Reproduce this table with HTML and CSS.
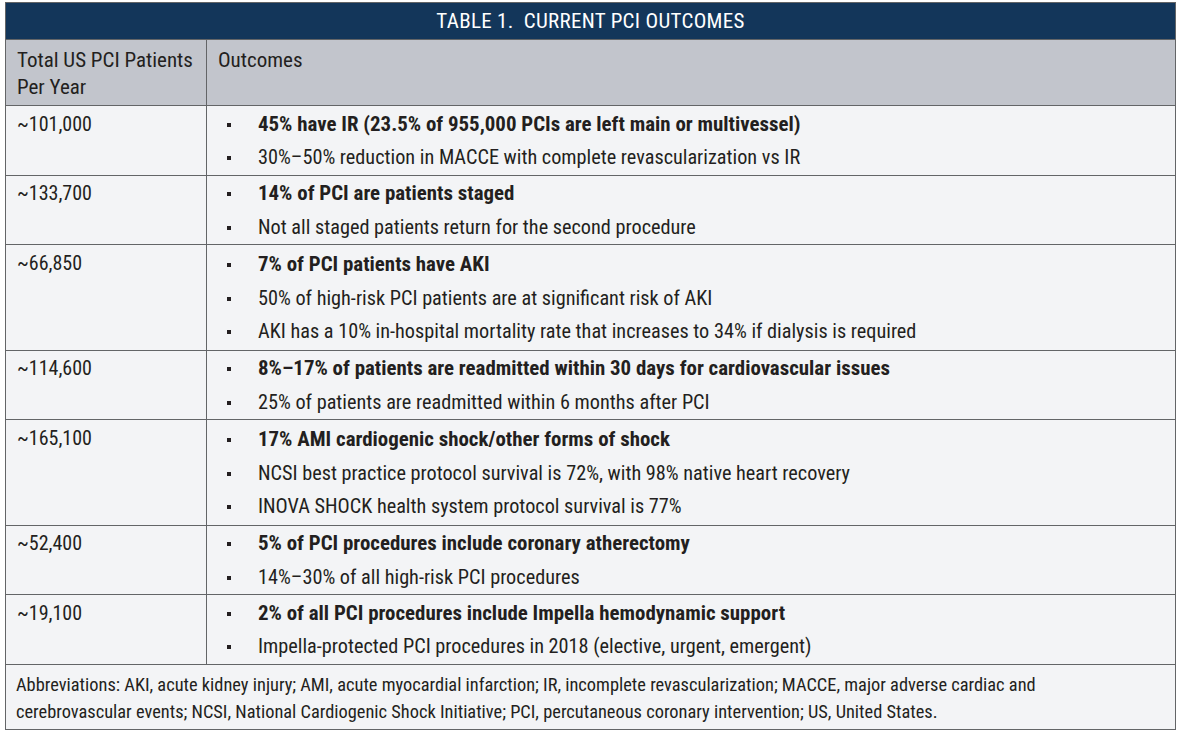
FILE: index.html
```html
<!DOCTYPE html>
<html>
<head>
<meta charset="utf-8">
<link rel="stylesheet" href="styles.css">
</head>
<body>
<table class="pci">
  <thead>
    <tr><th class="title" colspan="2">TABLE 1.&nbsp; CURRENT PCI OUTCOMES</th></tr>
    <tr class="head"><th class="c1">Total US PCI Patients<br>Per Year</th><th class="c2">Outcomes</th></tr>
  </thead>
  <tbody>
    <tr>
      <td class="num">~101,000</td>
      <td class="out"><ul>
        <li class="b">45% have IR (23.5% of 955,000 PCIs are left main or multivessel)</li>
        <li>30%–50% reduction in MACCE with complete revascularization vs IR</li>
      </ul></td>
    </tr>
    <tr>
      <td class="num">~133,700</td>
      <td class="out"><ul>
        <li class="b">14% of PCI are patients staged</li>
        <li>Not all staged patients return for the second procedure</li>
      </ul></td>
    </tr>
    <tr>
      <td class="num">~66,850</td>
      <td class="out"><ul class="three">
        <li class="b">7% of PCI patients have AKI</li>
        <li>50% of high-risk PCI patients are at significant risk of AKI</li>
        <li>AKI has a 10% in-hospital mortality rate that increases to 34% if dialysis is required</li>
      </ul></td>
    </tr>
    <tr>
      <td class="num">~114,600</td>
      <td class="out"><ul>
        <li class="b">8%–17% of patients are readmitted within 30 days for cardiovascular issues</li>
        <li>25% of patients are readmitted within 6 months after PCI</li>
      </ul></td>
    </tr>
    <tr>
      <td class="num">~165,100</td>
      <td class="out"><ul class="three">
        <li class="b">17% AMI cardiogenic shock/other forms of shock</li>
        <li>NCSI best practice protocol survival is 72%, with 98% native heart recovery</li>
        <li>INOVA SHOCK health system protocol survival is 77%</li>
      </ul></td>
    </tr>
    <tr>
      <td class="num">~52,400</td>
      <td class="out"><ul>
        <li class="b">5% of PCI procedures include coronary atherectomy</li>
        <li>14%–30% of all high-risk PCI procedures</li>
      </ul></td>
    </tr>
    <tr>
      <td class="num">~19,100</td>
      <td class="out"><ul>
        <li class="b">2% of all PCI procedures include Impella hemodynamic support</li>
        <li>Impella-protected PCI procedures in 2018 (elective, urgent, emergent)</li>
      </ul></td>
    </tr>
  </tbody>
  <tfoot>
    <tr><td class="foot" colspan="2">Abbreviations: AKI, acute kidney injury; AMI, acute myocardial infarction; IR, incomplete revascularization; MACCE, major adverse cardiac and<br>cerebrovascular events; NCSI, National Cardiogenic Shock Initiative; PCI, percutaneous coronary intervention; US, United States.</td></tr>
  </tfoot>
</table>
</body>
</html>
```
FILE: styles.css
```css
html, body {
  margin: 0;
  padding: 0;
  background: #ffffff;
}
body {
  padding: 2px 5px 0 5px;
  font-family: "Roboto Condensed", "Roboto", sans-serif;
  color: #231f20;
}
.pci {
  width: 1171px;
  border-collapse: collapse;
  background: #f3f4f6;
}
.pci th, .pci td {
  border: 1.5px solid #636567;
  vertical-align: top;
  text-align: left;
}
.title {
  background: #13365a;
  color: #ffffff;
  text-align: center !important;
  font-weight: normal;
  font-size: 21px;
  height: 36px;
  padding: 0;
  vertical-align: middle !important;
  letter-spacing: 0.3px;
}
.head th {
  background: #c2c5cc;
  font-weight: normal;
  font-size: 21px;
  line-height: 27px;
  padding: 7px 10px 4px 11px;
  height: 54px;
}
.c1 { width: 179px; }
.num {
  font-size: 20px;
  line-height: 33.5px;
  padding: 1.5px 10px 0 11px;
}
.out {
  padding: 0;
}
.pci ul {
  list-style: none;
  margin: 0;
  padding: 1.5px 0 0 0;
}
.pci ul.three {
  padding: 3px 0 1px 0;
}
.pci li {
  position: relative;
  font-size: 20.25px;
  line-height: 33.5px;
  padding-left: 51px;
  white-space: nowrap;
}
.pci li::before {
  content: "";
  position: absolute;
  left: 20px;
  top: 15px;
  width: 4px;
  height: 4px;
  background: #231f20;
}
.pci li.b {
  font-weight: bold;
  font-size: 20.9px;
}
.foot {
  font-size: 18.4px;
  line-height: 27px;
  padding: 6px 10px 4px 10px;
}
```
